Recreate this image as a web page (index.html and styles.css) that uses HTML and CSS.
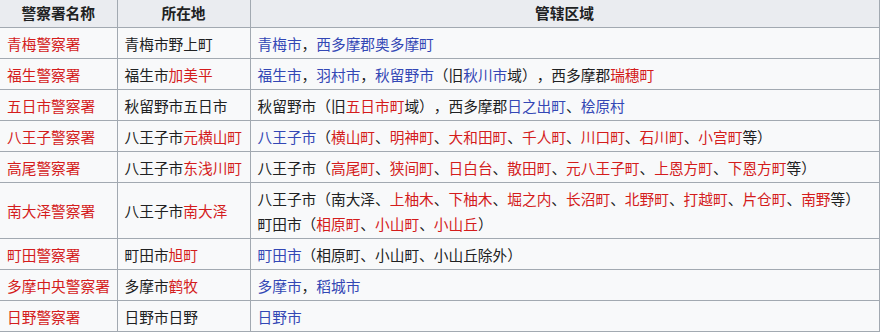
FILE: index.html
```html
<!DOCTYPE html>
<html lang="zh">
<head>
<meta charset="utf-8">
<title>警察署</title>
<link rel="stylesheet" href="styles.css">
</head>
<body>
<table class="wikitable">
  <colgroup>
    <col class="c1"><col class="c2"><col class="c3">
  </colgroup>
  <thead>
    <tr><th>警察署名称</th><th>所在地</th><th>管辖区域</th></tr>
  </thead>
  <tbody>
    <tr>
      <td><span class="red">青梅警察署</span></td>
      <td>青梅市野上町</td>
      <td><span class="blue">青梅市</span>，<span class="blue">西多摩郡奥多摩町</span></td>
    </tr>
    <tr>
      <td><span class="red">福生警察署</span></td>
      <td>福生市<span class="red">加美平</span></td>
      <td><span class="blue">福生市</span>，<span class="blue">羽村市</span>，<span class="blue">秋留野市</span>（旧<span class="blue">秋川市</span>域），西多摩郡<span class="red">瑞穗町</span></td>
    </tr>
    <tr>
      <td><span class="red">五日市警察署</span></td>
      <td>秋留野市五日市</td>
      <td>秋留野市（旧<span class="red">五日市町</span>域），西多摩郡<span class="blue">日之出町</span>、<span class="blue">桧原村</span></td>
    </tr>
    <tr>
      <td><span class="red">八王子警察署</span></td>
      <td>八王子市<span class="red">元横山町</span></td>
      <td><span class="blue">八王子市</span>（<span class="red">横山町</span>、<span class="red">明神町</span>、<span class="red">大和田町</span>、<span class="red">千人町</span>、<span class="red">川口町</span>、<span class="red">石川町</span>、<span class="red">小宫町</span>等）</td>
    </tr>
    <tr>
      <td><span class="red">高尾警察署</span></td>
      <td>八王子市<span class="red">东浅川町</span></td>
      <td>八王子市（<span class="red">高尾町</span>、<span class="red">狭间町</span>、<span class="red">日白台</span>、<span class="red">散田町</span>、<span class="red">元八王子町</span>、<span class="red">上恩方町</span>、<span class="red">下恩方町</span>等）</td>
    </tr>
    <tr>
      <td><span class="red">南大泽警察署</span></td>
      <td>八王子市<span class="red">南大泽</span></td>
      <td>八王子市（南大泽、<span class="red">上柚木</span>、<span class="red">下柚木</span>、<span class="red">堀之内</span>、<span class="red">长沼町</span>、<span class="red">北野町</span>、<span class="red">打越町</span>、<span class="red">片仓町</span>、<span class="red">南野</span>等）<br>町田市（<span class="red">相原町</span>、<span class="red">小山町</span>、<span class="red">小山丘</span>）</td>
    </tr>
    <tr>
      <td><span class="red">町田警察署</span></td>
      <td>町田市<span class="red">旭町</span></td>
      <td><span class="blue">町田市</span>（相原町、小山町、小山丘除外）</td>
    </tr>
    <tr>
      <td><span class="red">多摩中央警察署</span></td>
      <td>多摩市<span class="red">鹤牧</span></td>
      <td><span class="blue">多摩市</span>，<span class="blue">稻城市</span></td>
    </tr>
    <tr>
      <td><span class="red">日野警察署</span></td>
      <td>日野市日野</td>
      <td><span class="blue">日野市</span></td>
    </tr>
  </tbody>
</table>
</body>
</html>
```

FILE: styles.css
```css
html, body {
  margin: 0;
  padding: 0;
  background: #ffffff;
}

.wikitable {
  border-collapse: collapse;
  table-layout: fixed;
  width: 879px;
  background: #f8f9fa;
  color: #202122;
  font-family: "Noto Sans CJK SC", "Noto Sans", sans-serif;
  font-size: 14.7px;
  line-height: 25px;
  text-spacing-trim: space-all;
}

.c1 { width: 117px; }
.c2 { width: 133px; }
.c3 { width: 629px; }

.wikitable th,
.wikitable td {
  border: 1px solid #a2a9b1;
  padding: 2.5px 7px;
  text-align: left;
  vertical-align: middle;
  white-space: nowrap;
}

.wikitable td:last-child {
  white-space: normal;
}

.wikitable th {
  background: #eaecf0;
  font-weight: bold;
  text-align: center;
  border-top: 0;
  padding: 0 7px 2px;
}

.wikitable th:first-child,
.wikitable td:first-child {
  border-left: 0;
}

.red { color: #d41c1c; }
.blue { color: #3347b5; }
```
